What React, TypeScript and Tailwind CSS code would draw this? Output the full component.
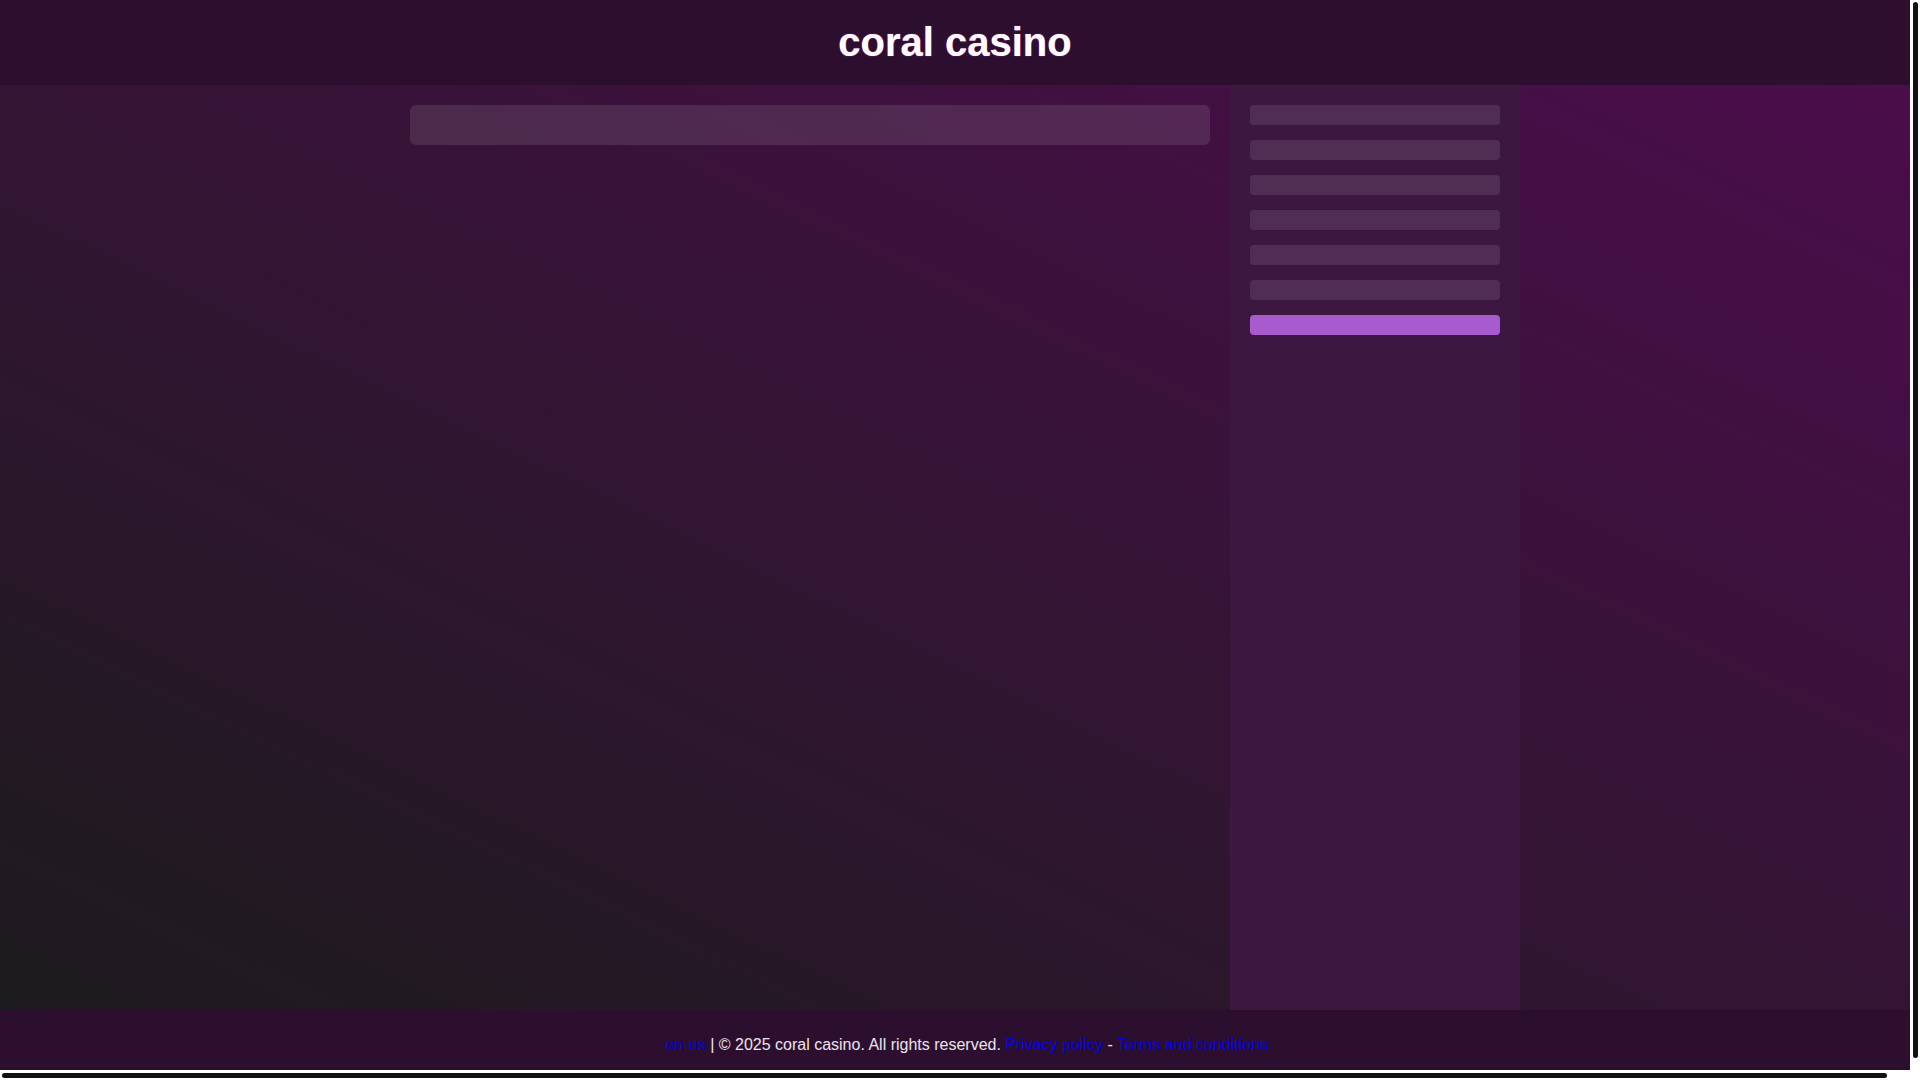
export default function App() {
  const rows = [0, 1, 2, 3, 4, 5];

  return (
    <div className="h-screen flex flex-col bg-white overflow-hidden font-['Liberation_Sans',Arial,sans-serif] text-white">
      <div className="flex-1 flex min-h-0">
        {/* Page */}
        <div className="flex-1 min-w-0 flex flex-col overflow-hidden">
          {/* Header */}
          <header className="shrink-0 bg-[#2c0f2e] py-5 text-center">
            <h1 className="text-[40px] leading-[45px] font-bold text-white [text-shadow:0_0_1px_#ff4fd8]">
              coral casino
            </h1>
          </header>

          {/* Main */}
          <main className="shrink-0 h-[925px] flex bg-[linear-gradient(to_top_right,#1c1b1d,#4b0d4b)]">
            <div className="w-[1130px] mx-auto flex">
              <section className="flex-1 p-5">
                <div className="h-10 rounded-md bg-white/10"></div>
              </section>

              <aside className="w-[290px] bg-[#3c1740] p-5 flex flex-col gap-[15px]">
                {rows.map((r) => (
                  <div key={r} className="h-5 rounded bg-white/10"></div>
                ))}
                <div className="h-5 rounded bg-[#a85bce]"></div>
              </aside>
            </div>
          </main>

          {/* Footer */}
          <footer className="shrink-0 w-[1920px] bg-[#2c0f2e] pl-[14px] py-[25px] text-center text-[16px] leading-5 text-[#ece4ec]">
            <a href="#" className="text-[#0000ee] underline">en-us</a>
            {' | © 2025 coral casino. All rights reserved. '}
            <a href="#" className="text-[#0000ee] underline">Privacy policy</a>
            {' - '}
            <a href="#" className="text-[#0000ee] underline">Terms and conditions</a>
          </footer>
        </div>

        {/* Vertical scrollbar */}
        <div className="w-[10px] shrink-0 bg-white pt-[2px]">
          <div className="ml-[3px] w-[5px] h-[1056px] rounded-full bg-[#111111]"></div>
        </div>
      </div>

      {/* Horizontal scrollbar */}
      <div className="h-[10px] shrink-0 bg-white pt-[3px] pl-[2px]">
        <div className="w-[1885px] h-[5px] rounded-full bg-[#111111]"></div>
      </div>
    </div>
  );
}
